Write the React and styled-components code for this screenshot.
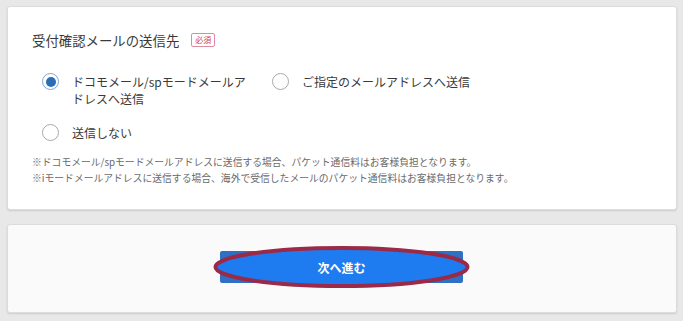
import React, { useState } from 'react';
import styled, { createGlobalStyle } from 'styled-components';

const GlobalStyle = createGlobalStyle`
  html, body {
    margin: 0;
    padding: 0;
    background: #e8e8e8;
    font-family: "Noto Sans CJK JP", "Noto Sans", sans-serif;
    color: #333;
  }
`;

const Page = styled.div`
  display: flex;
  flex-direction: column;
  gap: 14px;
  padding: 6px 6px 9px 7px;
`;

const Card = styled.section`
  background: ${(p) => (p.$muted ? '#fafafa' : '#fff')};
  border: 1px solid #dcdcdc;
  border-radius: 3px;
  box-shadow: 0 1px 2px rgba(0, 0, 0, 0.12);
`;

const FormCard = styled(Card)`
  padding: 23px 24px 23px 24px;
`;

const TitleRow = styled.div`
  display: flex;
  align-items: center;
  gap: 12px;
  height: 20px;
`;

const Title = styled.h2`
  margin: 0;
  font-size: 13.4px;
  font-weight: 400;
  color: #3a3a3a;
  line-height: 20px;
`;

const Badge = styled.span`
  font-size: 8px;
  line-height: 12px;
  color: #d23c5a;
  border: 1px solid #e08aa0;
  border-radius: 2px;
  padding: 0 3px;
`;

const Options = styled.div`
  display: grid;
  grid-template-columns: 230px 1fr;
  row-gap: 17px;
  margin: 23px 0 0 10px;
`;

const Option = styled.label`
  display: flex;
  align-items: flex-start;
  gap: 13px;
  font-size: 12px;
  line-height: 17px;
  color: #3a3a3a;
  cursor: pointer;
`;

const Radio = styled.span`
  flex: none;
  box-sizing: border-box;
  width: 17px;
  height: 17px;
  border-radius: 50%;
  border: 1px solid ${(p) => (p.$checked ? '#7fa6d6' : '#a8a8a8')};
  display: flex;
  align-items: center;
  justify-content: center;
  background: #fff;

  &::after {
    content: '';
    width: 10px;
    height: 10px;
    border-radius: 50%;
    background: ${(p) => (p.$checked ? '#2a6db5' : 'transparent')};
  }
`;

const OptionText = styled.span`
  max-width: ${(p) => p.$max || 'none'};
`;

const Notes = styled.div`
  margin-top: 13px;
  font-size: 9.8px;
  line-height: 16px;
  color: #6a6a6a;
`;

const ActionCard = styled(Card)`
  display: flex;
  justify-content: center;
  padding: 26px 0 29px;
`;

const ButtonWrap = styled.div`
  position: relative;
  margin-left: -1px;
`;

const NextButton = styled.button`
  width: 243px;
  height: 32px;
  border: none;
  border-radius: 2px;
  background: #2d70c4;
  color: #fff;
  font-family: inherit;
  font-size: 12px;
  font-weight: 700;
  cursor: pointer;
`;

const Mark = styled.svg`
  position: absolute;
  left: -8px;
  top: -6px;
  width: 259px;
  height: 44px;
  pointer-events: none;
`;

const MarkText = styled.span`
  position: absolute;
  inset: 0;
  display: flex;
  align-items: center;
  justify-content: center;
  color: #fff;
  font-size: 12px;
  font-weight: 700;
  pointer-events: none;
`;

const options = [
  { id: 'docomo', label: 'ドコモメール/spモードメールアドレスへ送信', max: '178px' },
  { id: 'other', label: 'ご指定のメールアドレスへ送信' },
  { id: 'none', label: '送信しない' },
];

export default function App() {
  const [selected, setSelected] = useState('docomo');

  return (
    <>
      <GlobalStyle />
      <Page>
        <FormCard>
          <TitleRow>
            <Title>受付確認メールの送信先</Title>
            <Badge>必須</Badge>
          </TitleRow>
          <Options>
            {options.map((o) => (
              <Option key={o.id} onClick={() => setSelected(o.id)}>
                <Radio $checked={selected === o.id} />
                <OptionText $max={o.max}>{o.label}</OptionText>
              </Option>
            ))}
          </Options>
          <Notes>
            <div>※ドコモメール/spモードメールアドレスに送信する場合、パケット通信料はお客様負担となります。</div>
            <div>※iモードメールアドレスに送信する場合、海外で受信したメールのパケット通信料はお客様負担となります。</div>
          </Notes>
        </FormCard>
        <ActionCard $muted>
          <ButtonWrap>
            <NextButton>次へ進む</NextButton>
            {/* red hand-drawn ellipse annotation over the button */}
            <Mark viewBox="0 0 259 44">
              <ellipse cx="129.5" cy="22" rx="126" ry="19" fill="#1e7cf0" stroke="#9b2a48" strokeWidth="4" />
            </Mark>
            <MarkText>次へ進む</MarkText>
          </ButtonWrap>
        </ActionCard>
      </Page>
    </>
  );
}
